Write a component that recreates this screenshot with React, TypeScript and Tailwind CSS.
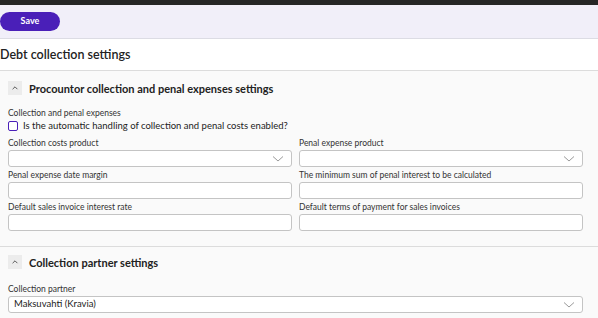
import React from 'react';

const font = { fontFamily: 'Lato, "Noto Sans", sans-serif' };

const ChevronUp = () => (
  <svg width="8" height="8" viewBox="0 0 10 10" fill="none" stroke="#555" strokeWidth={1.2}>
    <path d="M2 6.5 L5 3.5 L8 6.5" />
  </svg>
);

const ChevronDown = () => (
  <svg width="12" height="8" viewBox="0 0 12 8" fill="none" stroke="#9a9a9a" strokeWidth={1}>
    <path d="M1 1.5 L6 6 L11 1.5" />
  </svg>
);

const SectionHeader: React.FC<{ title: string }> = ({ title }) => (
  <div className="flex items-center gap-[7px] px-2 h-[14px]">
    <div className="w-[14px] h-[14px] bg-[#ececec] flex items-center justify-center">
      <ChevronUp />
    </div>
    <span className="text-[11px] font-bold text-[#222] leading-none">{title}</span>
  </div>
);

const Field: React.FC<{ label: string; select?: boolean; value?: string }> = ({ label, select, value }) => (
  <div className="flex flex-col">
    <label className="text-[8.5px] text-[#333] leading-[12px] mb-[1px]">{label}</label>
    <div className="h-[17px] bg-white border border-[#c4c4c4] rounded-[3px] flex items-center justify-between pl-[5px] pr-[7px]">
      <span className="text-[9.5px] text-[#222]">{value}</span>
      {select && <ChevronDown />}
    </div>
  </div>
);

export default function App() {
  return (
    <div className="w-[598px] h-[318px] bg-[#fafafa] overflow-hidden" style={font}>
      <div className="h-[5px] bg-[#262626]" />
      <div className="h-[34px] bg-[#f1eff9] border-b border-[#dcdce4] flex items-center">
        <button className="w-[60px] h-[19px] bg-[#4a1fb8] rounded-full text-white text-[9px] font-bold mt-[-1px]">
          Save
        </button>
      </div>
      <div className="h-[32px] bg-white border-b border-[#dcdcdc] flex items-center pt-[2px]">
        <h1 className="text-[12.5px] font-semibold text-[#222]">Debt collection settings</h1>
      </div>

      <div className="pt-[10px]">
        <SectionHeader title="Procountor collection and penal expenses settings" />
        <div className="pl-2 pr-[15px] pt-[13px]">
          <div className="text-[8.5px] text-[#333] leading-[11px]">Collection and penal expenses</div>
          <div className="flex items-center gap-[5px] mt-[1px] h-[12px]">
            <div className="w-[10px] h-[10px] border border-[#4a1fb8] rounded-[2px] bg-white" />
            <span className="text-[9.5px] text-[#222] leading-none">Is the automatic handling of collection and penal costs enabled?</span>
          </div>
          <div className="grid grid-cols-2 gap-x-[7px] gap-y-[2px] mt-[5px]">
            <Field label="Collection costs product" select />
            <Field label="Penal expense product" select />
            <Field label="Penal expense date margin" />
            <Field label="The minimum sum of penal interest to be calculated" />
            <Field label="Default sales invoice interest rate" />
            <Field label="Default terms of payment for sales invoices" />
          </div>
        </div>
        <div className="border-b border-[#dcdcdc] mt-[15px]" />
        <div className="pt-[8px]">
          <SectionHeader title="Collection partner settings" />
          <div className="pl-2 pr-[15px] pt-[14px]">
            <Field label="Collection partner" select value="Maksuvahti (Kravia)" />
          </div>
        </div>
      </div>
    </div>
  );
}
